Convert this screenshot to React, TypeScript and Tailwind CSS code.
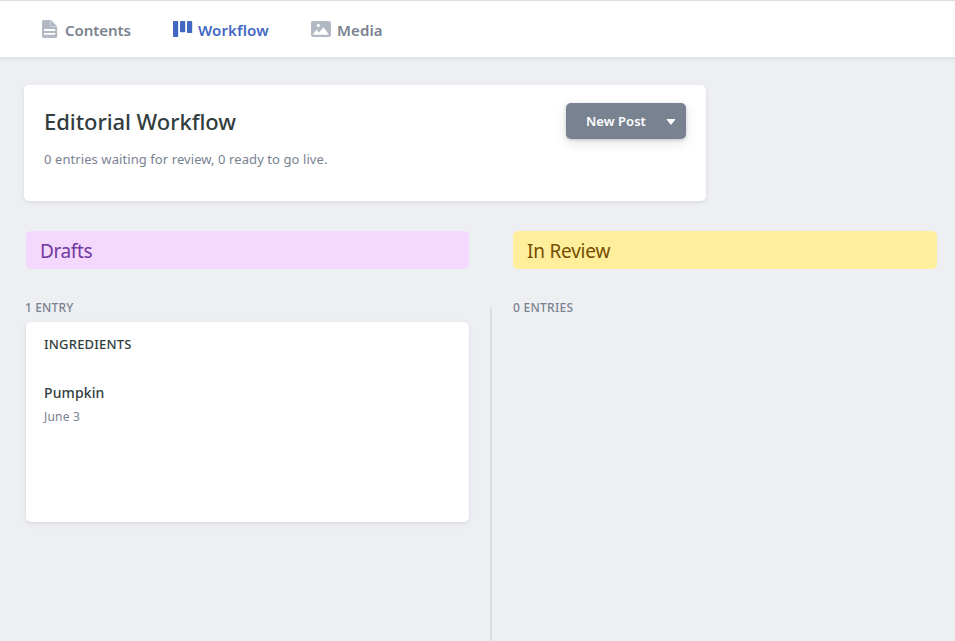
import type { ReactNode } from "react";

function PageIcon() {
  return (
    <svg width="16" height="18" viewBox="0 0 16 18" className="shrink-0 fill-[#b3b9c4]">
      <path
        fillRule="evenodd"
        d="M1.5 0H8.6V5.4a1.2 1.2 0 0 0 1.2 1.2H15.2V16.5A1.5 1.5 0 0 1 13.7 18H1.5A1.5 1.5 0 0 1 0 16.5V1.5A1.5 1.5 0 0 1 1.5 0ZM2 9v1.9h11.2V9ZM2 12.9v1.9h11.2v-1.9Z"
      />
      <path d="M8.9 0.1 15.1 6.3H9.7a.8.8 0 0 1-.8-.8Z" />
    </svg>
  );
}

function BoardIcon() {
  return (
    <svg width="20" height="16" viewBox="0 0 20 16" className="shrink-0 fill-[#4368c4]">
      <rect x="0" y="0" width="5.2" height="16" rx="0.8" />
      <rect x="7" y="0" width="5.2" height="11.2" rx="0.8" />
      <rect x="14" y="0" width="5.2" height="12" rx="0.8" />
    </svg>
  );
}

function MediaIcon() {
  return (
    <svg width="20" height="16" viewBox="0 0 20 16" className="shrink-0">
      <rect width="20" height="16" rx="2" fill="#b3b9c4" />
      <circle cx="7.3" cy="4.4" r="1.6" fill="#fff" />
      <path d="M1.7 13.8 5.3 8.8 8 11.6 12.6 6.2 17.9 13.8Z" fill="#fff" />
    </svg>
  );
}

function Count({ children }: { children: ReactNode }) {
  return <p className="h-[22px] text-[12px] leading-[22px] font-medium whitespace-nowrap text-[#798291]">{children}</p>;
}

export default function App() {
  return (
    <div className="h-[641px] w-[955px] overflow-hidden bg-[#eeeff3] font-['Noto_Sans','Open_Sans',sans-serif] text-[#313d3e]">
      <header className="h-[57px] border-t border-[#dcdcdd] bg-white shadow-[0_2px_6px_0_rgba(68,74,87,0.05),0_1px_3px_0_rgba(68,74,87,0.10)]">
        <nav className="flex h-full items-center pl-[42px] text-[15px] font-semibold whitespace-nowrap text-[#7b8290]">
          <a className="flex w-[131px] items-center gap-[7px]">
            <PageIcon />
            <span className="pt-[3px] tracking-[-0.05px]">Contents</span>
          </a>
          <a className="flex w-[138px] items-center gap-[5px] text-[#4368c4]">
            <BoardIcon />
            <span className="pt-[3px] tracking-[0.12px]">Workflow</span>
          </a>
          <a className="flex items-center gap-[6px]">
            <MediaIcon />
            <span className="pt-[3px] tracking-[0.1px]">Media</span>
          </a>
        </nav>
      </header>

      <main className="pt-7 pl-6">
        <section className="flex h-[116px] w-[682px] items-start justify-between rounded-[5px] bg-white pt-[18px] pr-5 pl-5 shadow-[0_2px_6px_0_rgba(68,74,87,0.05),0_1px_3px_0_rgba(68,74,87,0.10)]">
          <div className="whitespace-nowrap">
            <h1 className="h-[38px] text-[22px] leading-[36px] font-medium tracking-[-0.06px]">Editorial Workflow</h1>
            <p className="mt-[7px] text-[13px] leading-[22px] tracking-[0.08px] text-[#798291]">0 entries waiting for review, 0 ready to go live.</p>
          </div>
          <button className="flex h-9 w-[120px] items-center rounded-[5px] bg-[#798291] pl-5 text-[13px] font-semibold whitespace-nowrap text-white shadow-[0_4px_12px_0_rgba(68,74,87,0.15),0_1px_3px_0_rgba(68,74,87,0.25)]">
            <span className="w-20 pt-[2px] text-left tracking-[0.05px]">New Post</span>
            <svg width="10" height="6" viewBox="0 0 10 6" className="mt-[2px] fill-white">
              <path d="M1.2 0H8.8Q9.6 0 9.2 .7L5.6 5.3Q5 6 4.4 5.3L.8 .7Q.4 0 1.2 0Z" />
            </svg>
          </button>
        </section>

        <div className="mt-[30px] flex pl-[2px]">
          <section className="w-[443px]">
            <h2 className="h-[38px] rounded-[5px] bg-[#f4d8fe] pl-[14px] text-[19px] leading-[41px] font-normal tracking-[-0.4px] text-[#70399f]">Drafts</h2>
            <div className="mt-[28px] ml-[-1px] tracking-[0.15px]">
              <Count>1 ENTRY</Count>
            </div>
            <article className="mt-[3px] h-[200px] rounded-[5px] bg-white pt-[11px] pl-[18px] whitespace-nowrap shadow-[0_2px_6px_0_rgba(68,74,87,0.05),0_1px_3px_0_rgba(68,74,87,0.10)]">
              <p className="text-[13px] leading-[22px] font-medium tracking-[0.2px]">INGREDIENTS</p>
              <h3 className="mt-[27px] text-[14px] leading-[22px] font-medium tracking-[0.12px]">Pumpkin</h3>
              <p className="mt-[2px] text-[12px] leading-[22px] tracking-[0.2px] text-[#798291]">June 3</p>
            </article>
          </section>
          <div className="mt-[76px] ml-[21px] h-[334px] w-[2px] bg-[#dcdee3]" />
          <section className="ml-[21px] w-[424px]">
            <h2 className="h-[38px] rounded-[5px] bg-[#ffee9c] pl-[14px] text-[19px] leading-[41px] font-normal tracking-[-0.22px] text-[#754e00]">In Review</h2>
            <div className="mt-[28px] tracking-[0.28px]">
              <Count>0 ENTRIES</Count>
            </div>
          </section>
        </div>
      </main>
    </div>
  );
}
